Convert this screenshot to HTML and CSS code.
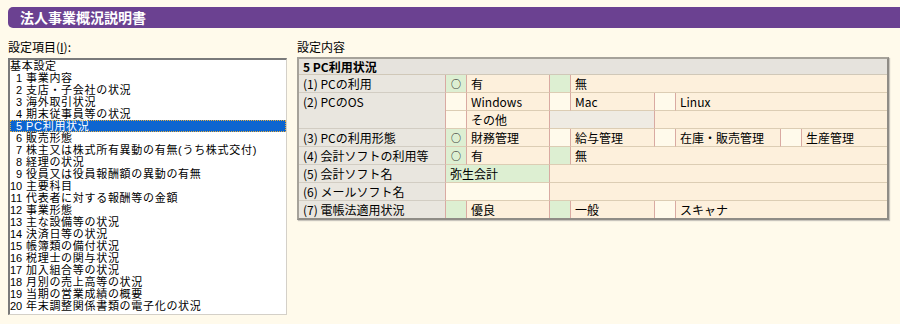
FILE: index.html
```html
<!DOCTYPE html>
<html lang="ja">
<head>
  <meta charset="UTF-8">
  <title>法人事業概況説明書</title>
  <link rel="stylesheet" href="styles.css">
</head>
<body>
  <div class="titlebar">法人事業概況説明書</div>
  <div class="main">
    <!-- 設定項目 -->
    <div class="items">
      <div class="caption">設定項目(<u>I</u>):</div>
      <ul class="listbox">
        <li>基本設定</li>
        <li><span class="no">1</span>事業内容</li>
        <li><span class="no">2</span>支店・子会社の状況</li>
        <li><span class="no">3</span>海外取引状況</li>
        <li><span class="no">4</span>期末従事員等の状況</li>
        <li class="sel"><span class="no">5</span>PC利用状況</li>
        <li><span class="no">6</span>販売形態</li>
        <li><span class="no">7</span>株主又は株式所有異動の有無(うち株式交付)</li>
        <li><span class="no">8</span>経理の状況</li>
        <li><span class="no">9</span>役員又は役員報酬額の異動の有無</li>
        <li><span class="no">10</span>主要科目</li>
        <li><span class="no">11</span>代表者に対する報酬等の金額</li>
        <li><span class="no">12</span>事業形態</li>
        <li><span class="no">13</span>主な設備等の状況</li>
        <li><span class="no">14</span>決済日等の状況</li>
        <li><span class="no">15</span>帳簿類の備付状況</li>
        <li><span class="no">16</span>税理士の関与状況</li>
        <li><span class="no">17</span>加入組合等の状況</li>
        <li><span class="no">18</span>月別の売上高等の状況</li>
        <li><span class="no">19</span>当期の営業成績の概要</li>
        <li><span class="no">20</span>年末調整関係書類の電子化の状況</li>
      </ul>
    </div>
    <!-- 設定内容 -->
    <div class="content">
      <div class="caption">設定内容</div>
      <table class="sheet">
        <colgroup>
          <col class="c-label">
          <col class="c-radio"><col class="c-t1">
          <col class="c-radio"><col class="c-t2">
          <col class="c-radio"><col class="c-t3">
          <col class="c-radio"><col class="c-t4">
        </colgroup>
        <tr>
          <td class="head" colspan="9">5 PC利用状況</td>
        </tr>
        <tr>
          <td class="label">(1) PCの利用</td>
          <td class="radio on">○</td><td class="opt">有</td>
          <td class="radio on"></td><td class="opt end" colspan="5">無</td>
        </tr>
        <tr>
          <td class="label top" rowspan="2">(2) PCのOS</td>
          <td class="radio"></td><td class="opt">Windows</td>
          <td class="radio"></td><td class="opt">Mac</td>
          <td class="radio"></td><td class="opt end" colspan="3">Linux</td>
        </tr>
        <tr>
          <td class="radio"></td><td class="opt">その他</td>
          <td class="off" colspan="2"></td><td class="opt end" colspan="4"></td>
        </tr>
        <tr>
          <td class="label">(3) PCの利用形態</td>
          <td class="radio on">○</td><td class="opt">財務管理</td>
          <td class="radio"></td><td class="opt">給与管理</td>
          <td class="radio"></td><td class="opt">在庫・販売管理</td>
          <td class="radio"></td><td class="opt end">生産管理</td>
        </tr>
        <tr>
          <td class="label">(4) 会計ソフトの利用等</td>
          <td class="radio on">○</td><td class="opt">有</td>
          <td class="radio on"></td><td class="opt end" colspan="5">無</td>
        </tr>
        <tr>
          <td class="label">(5) 会計ソフト名</td>
          <td class="opt input on" colspan="2">弥生会計</td>
          <td class="opt end" colspan="6"></td>
        </tr>
        <tr>
          <td class="label">(6) メールソフト名</td>
          <td class="opt input" colspan="2"></td>
          <td class="opt end" colspan="6"></td>
        </tr>
        <tr class="last">
          <td class="label">(7) 電帳法適用状況</td>
          <td class="radio on"></td><td class="opt">優良</td>
          <td class="radio on"></td><td class="opt">一般</td>
          <td class="radio"></td><td class="opt end" colspan="3">スキャナ</td>
        </tr>
      </table>
    </div>
  </div>
</body>
</html>
```

FILE: styles.css
```css
body {
  margin: 0;
  background: #fffaeb;
  font-family: "Noto Sans CJK JP", sans-serif;
  font-size: 12px;
  color: #000;
}

.titlebar {
  margin: 7px 0 0 8px;
  height: 21px;
  line-height: 21px;
  padding-left: 12px;
  background: #6b4191;
  border-radius: 5px 0 0 5px;
  color: #fff;
  font-size: 14px;
  font-weight: bold;
}

.main { display: flex; gap: 10px; padding: 11px 0 0 8px; }
.caption { height: 15px; line-height: 15px; }

/* 左：リストボックス */
.items { width: 279px; }
.listbox {
  list-style: none;
  margin: 4px 0 0;
  padding: 0 0 3px;
  height: 251px;
  background: #fff;
  border-top: 2px solid #7a7a7a;
  border-left: 2px solid #7a7a7a;
  border-right: 1px solid #d4d0c8;
  border-bottom: 1px solid #d4d0c8;
  overflow: hidden;
  font-family: "Liberation Sans", "Noto Sans CJK JP", sans-serif;
  font-size: 11px;
  letter-spacing: 0.7px;
}
.listbox li { height: 12px; line-height: 12px; white-space: nowrap; }
.listbox li .no { display: inline-block; width: 12px; margin-right: 4px; text-align: right; letter-spacing: 0; }
.listbox li.sel { background: #0d65d0; color: #fff; outline: 1px dotted #e8b040; outline-offset: -1px; }

/* 右：設定内容テーブル */
.content { width: 592px; }
.sheet {
  margin-top: 3px;
  width: 592px;
  table-layout: fixed;
  border-collapse: separate;
  border-spacing: 0;
  border-top: 2px solid #a6a29a;
  border-left: 2px solid #a6a29a;
  border-right: 2px solid #8f8c86;
  border-bottom: 2px solid #8f8c86;
  box-shadow: 1px 1px 1px #c9c5bd;
}
.c-label { width: 147px; }
.c-radio { width: 21px; }
.c-t1 { width: 83px; }
.c-t2 { width: 84px; }
.c-t3 { width: 105px; }
.c-t4 { width: 85px; }

.sheet td {
  height: 17px;
  padding: 0 0 0 4px;
  line-height: 17px;
  white-space: nowrap;
  overflow: hidden;
  border-bottom: 1px solid #dccdb4;
  border-right: 1px solid #d9aaa2;
}
.sheet .last td { border-bottom: none; }
.sheet td.head {
  height: 15px;
  line-height: 15px;
  font-weight: bold;
  background: #e6e3dd;
  border-right: none;
  border-bottom-color: #d0c8b8;
}
.sheet td.label { background: #e9e6df; border-bottom-color: #d2cdc3; }
.sheet td.label.top { vertical-align: top; }
.sheet td.radio { padding: 0; text-align: center; font-size: 10px; background: #fffaeb; }
.sheet td.opt { background: #fdf0dc; }
.sheet td.end { border-right: none; }
.sheet td.input { background: #fffaeb; }
.sheet td.on { background: #ddefd2; }
.sheet td.off { background: #efebe3; }
```
